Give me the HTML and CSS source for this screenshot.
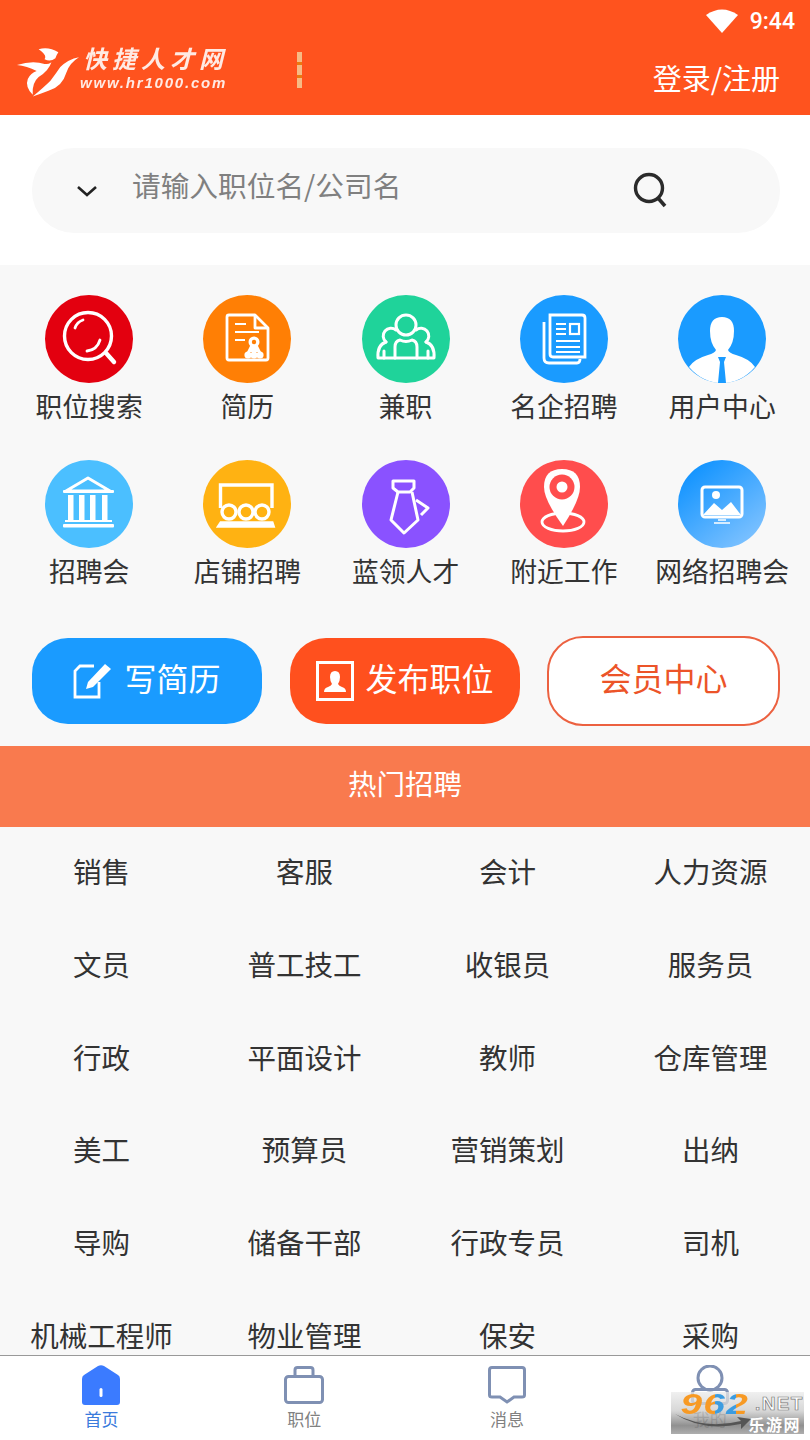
FILE: index.html
```html
<!DOCTYPE html>
<html>
  <head>
    <meta charset="UTF-8" />
    <title>快捷人才网</title>
    <link rel="stylesheet" href="styles.css">
  </head>
  <body>
    <div id="header">
      <div class="status">
        <svg class="wifi" width="32" height="24" viewBox="0 0 32 24"><path d="M0 6 Q16 -5 32 6 L16 24 Z" fill="#fff"/></svg>
        <span class="time">9:44</span>
      </div>
      <div class="head-row">
        <div class="logo">
          <svg width="66" height="50" viewBox="0 0 66 50" fill="#fff">
            <path d="M24 2 Q34 -1 44 5 Q42 8 41 11 Q36 15 30 12 Q33 8 24 2 Z"/>
            <path d="M2 18 Q18 13 30 17 Q35 17 37 15 Q34 24 24 30 Q17 36 18 48 Q10 40 13 32 Q16 26 22 24 Q12 19 2 18 Z"/>
            <path d="M65 10 Q55 16 52 26 Q48 40 34 44 Q26 47 18 50 Q30 40 36 34 Q42 26 46 20 Q54 12 65 10 Z"/>
          </svg>
          <div class="logo-text">
            <span class="logo-name">快捷人才网</span>
            <span class="logo-url">www.hr1000.com</span>
          </div>
        </div>
        <div class="logo-bar"></div>
        <a class="login">登录/注册</a>
      </div>
    </div>

    <div id="search">
      <div class="search-box">
        <svg class="chev" width="22" height="12" viewBox="0 0 22 12"><path d="M2 2 L11 10 L20 2" fill="none" stroke="#222" stroke-width="2.6"/></svg>
        <span class="placeholder">请输入职位名/公司名</span>
        <svg class="lens" width="36" height="36" viewBox="0 0 36 36"><circle cx="16" cy="16" r="13.5" fill="none" stroke="#2b2b2b" stroke-width="3.4"/><path d="M25 26 L32 34" stroke="#2b2b2b" stroke-width="3.6" fill="none"/></svg>
      </div>
    </div>

    <div id="menu">
      <div class="menu-grid">
        <div class="cell">
          <svg class="ico" viewBox="0 0 88 88"><circle cx="44" cy="44" r="44" fill="#e3000f"/><g fill="none" stroke="#fff" stroke-linecap="round"><circle cx="43" cy="41" r="23.5" stroke-width="3.4"/><path d="M61 58 L69 67" stroke-width="4.4"/><path d="M30 33 Q32 27 38 25" stroke-width="2.8"/><path d="M42 56 Q52 55 55 45" stroke-width="2.8"/></g></svg>
          <span>职位搜索</span>
        </div>
        <div class="cell">
          <svg class="ico" viewBox="0 0 88 88"><circle cx="44" cy="44" r="44" fill="#ff7f05"/><g fill="none" stroke="#fff" stroke-width="2.8" stroke-linejoin="round"><path d="M26 20 H52 L65 33 V63 Q65 65 63 65 H26 Q24 65 24 63 V22 Q24 20 26 20 Z"/><path d="M52 20 V33 H65"/><path d="M32 29 H43 M32 37 H56 M32 45 H42" stroke-width="2.2"/></g><g fill="#fff"><circle cx="51" cy="47" r="5.5"/><circle cx="45" cy="60" r="3.6"/><circle cx="51" cy="60" r="3.6"/><circle cx="57" cy="60" r="3.6"/><path d="M47 51 H55 L58 57 H44 Z"/></g><circle cx="51" cy="47" r="2.2" fill="#ff7f05"/></svg>
          <span>简历</span>
        </div>
        <div class="cell">
          <svg class="ico" viewBox="0 0 88 88"><circle cx="44" cy="44" r="44" fill="#1fd39a"/><g fill="none" stroke="#fff" stroke-width="3" stroke-linejoin="round" stroke-linecap="round"><circle cx="44" cy="30" r="10"/><path d="M34 35 A7.5 7.5 0 1 0 24 47"/><path d="M54 35 A7.5 7.5 0 1 1 64 47"/><path d="M24 47 Q15 50 16 63 H72 Q73 50 64 47"/><path d="M33 63 V52 Q33 46 38 45 Q44 48 50 45 Q55 46 55 52 V63"/><path d="M22 63 V56 M66 63 V56"/></g></svg>
          <span>兼职</span>
        </div>
        <div class="cell">
          <svg class="ico" viewBox="0 0 88 88"><circle cx="44" cy="44" r="44" fill="#1a9bff"/><g fill="none" stroke="#fff" stroke-width="2.8"><path d="M30 20 H62 Q65 20 65 23 V62 H33 Q30 62 30 59 Z"/><path d="M24 27 V63 Q24 68 29 68 H57 Q60 68 60 64"/><path d="M36 29 H46 M36 34 H46 M36 39 H46 M36 46 H60 M36 52 H60 M36 57 H60" stroke-width="2"/><rect x="50" y="29" width="9" height="10" stroke-width="2.2"/></g></svg>
          <span>名企招聘</span>
        </div>
        <div class="cell">
          <svg class="ico" viewBox="0 0 88 88"><circle cx="44" cy="44" r="44" fill="#1a9bff"/><path d="M44 22 Q56 22 56 36 Q56 48 50 55 Q51 58 58 60 Q72 64 77 72 Q63 88 44 88 Q25 88 11 72 Q16 64 30 60 Q37 58 38 55 Q32 48 32 36 Q32 22 44 22 Z" fill="#fff"/><path d="M40 62 H48 L46 67 L48 88 H40 L42 67 Z" fill="#1a9bff"/></svg>
          <span>用户中心</span>
        </div>
        <div class="cell">
          <svg class="ico" viewBox="0 0 88 88"><circle cx="44" cy="44" r="44" fill="#4bbfff"/><path d="M43 18 L21 31 H65 Z" fill="none" stroke="#fff" stroke-width="3" stroke-linejoin="round"/><g fill="#fff"><rect x="18" y="30" width="51" height="3" rx="1"/><rect x="23" y="35" width="5.5" height="25"/><rect x="34" y="35" width="5.5" height="25"/><rect x="45" y="35" width="5.5" height="25"/><rect x="57" y="35" width="5.5" height="25"/><rect x="20" y="60" width="47" height="2"/><rect x="18" y="64" width="51" height="3.5" rx="1"/></g></svg>
          <span>招聘会</span>
        </div>
        <div class="cell">
          <svg class="ico" viewBox="0 0 88 88"><circle cx="44" cy="44" r="44" fill="#ffb212"/><g fill="none" stroke="#fff" stroke-width="3.4"><path d="M17.5 48 V25 H69 V48"/><circle cx="26" cy="52" r="7"/><circle cx="43" cy="52" r="7"/><circle cx="59" cy="52" r="7"/><path d="M18 63 H69 L70 66 H16 Z"/></g></svg>
          <span>店铺招聘</span>
        </div>
        <div class="cell">
          <svg class="ico" viewBox="0 0 88 88"><circle cx="44" cy="44" r="44" fill="#8a52ff"/><g fill="none" stroke="#fff" stroke-width="3" stroke-linejoin="round"><path d="M31 21 H52 V28 L48 32 H36 L31 28 Z"/><path d="M36 32 L29 60 L42 73 L56 60 L50 32"/><path d="M54 40 L66 48 L59 55"/></g></svg>
          <span>蓝领人才</span>
        </div>
        <div class="cell">
          <svg class="ico" viewBox="0 0 88 88"><circle cx="44" cy="44" r="44" fill="#ff4d4d"/><ellipse cx="43" cy="62" rx="21" ry="9" fill="none" stroke="#fff" stroke-width="2.8"/><path d="M42 9 Q60 9 60 27 Q60 40 43 66 Q24 40 24 27 Q24 9 42 9 Z" fill="#fff"/><circle cx="42" cy="27" r="12.5" fill="#ff4d4d"/><circle cx="42" cy="27" r="5.5" fill="#fff"/></svg>
          <span>附近工作</span>
        </div>
        <div class="cell">
          <svg class="ico" viewBox="0 0 88 88"><defs><linearGradient id="screen" x1="0.2" y1="0.1" x2="0.85" y2="0.9"><stop offset="0" stop-color="#1595ff"/><stop offset="1" stop-color="#7cc1ff"/></linearGradient></defs><circle cx="44" cy="44" r="44" fill="url(#screen)"/><rect x="24" y="27" width="40" height="30" rx="3" fill="none" stroke="#fff" stroke-width="3"/><circle cx="38" cy="35" r="4" fill="#fff"/><path d="M25 55 L36 43 L44 50 L53 42 L63 55 Z" fill="#fff"/><path d="M36 63 H52 M40 60 H48" stroke="#fff" stroke-width="1.6"/></svg>
          <span>网络招聘会</span>
        </div>
      </div>

      <div class="actions">
        <a class="act act-blue">
          <svg width="40" height="38" viewBox="0 0 40 38"><path d="M21 4 H7 L2 9 V35 H26 V20" fill="none" stroke="#fff" stroke-width="2.8"/><path d="M13 27 L15 20 L32 2 L38 7 L20 25 Z" fill="#fff"/></svg>
          <span class="act-text">写简历</span>
        </a>
        <a class="act act-orange">
          <svg width="38" height="40" viewBox="0 0 38 40"><rect x="1.5" y="1.5" width="35" height="37" fill="none" stroke="#fff" stroke-width="3"/><path d="M19 10 Q24 10 24 16 Q24 20 22 23 Q23 25 26 26 Q30 27 30 31 H8 Q8 27 12 26 Q15 25 16 23 Q14 20 14 16 Q14 10 19 10 Z" fill="#fff"/></svg>
          <span class="act-text">发布职位</span>
        </a>
        <a class="act act-line"><span class="act-text">会员中心</span></a>
      </div>
    </div>

    <div id="banner">热门招聘</div>

    <div id="hot">
      <span>销售</span><span>客服</span><span>会计</span><span>人力资源</span>
      <span>文员</span><span>普工技工</span><span>收银员</span><span>服务员</span>
      <span>行政</span><span>平面设计</span><span>教师</span><span>仓库管理</span>
      <span>美工</span><span>预算员</span><span>营销策划</span><span>出纳</span>
      <span>导购</span><span>储备干部</span><span>行政专员</span><span>司机</span>
      <span>机械工程师</span><span>物业管理</span><span>保安</span><span>采购</span>
    </div>

    <div id="nav">
      <div class="tab on">
        <svg width="38" height="40" viewBox="0 0 38 40"><path d="M16 1 Q19 -0.5 22 1 L36 10 Q38 11 38 14 V37 Q38 40 35 40 H3 Q0 40 0 37 V14 Q0 11 2 10 Z" fill="#3b7bff"/><rect x="17.5" y="23" width="3" height="9" rx="1.5" fill="#fff"/></svg>
        <span>首页</span>
      </div>
      <div class="tab">
        <svg width="40" height="38" viewBox="0 0 40 38"><rect x="1.5" y="10.5" width="37" height="26" rx="3" fill="none" stroke="#7f90b3" stroke-width="3"/><path d="M11 10 V4 Q11 1.5 13.5 1.5 H26.5 Q29 1.5 29 4 V10" fill="none" stroke="#7f90b3" stroke-width="3"/></svg>
        <span>职位</span>
      </div>
      <div class="tab">
        <svg width="38" height="38" viewBox="0 0 38 38"><path d="M4 1.5 H34 Q36.5 1.5 36.5 4 V29 Q36.5 31 34 31 H26 L19 36 L12 31 H4 Q1.5 31 1.5 29 V4 Q1.5 1.5 4 1.5 Z" fill="none" stroke="#7f90b3" stroke-width="3"/></svg>
        <span>消息</span>
      </div>
      <div class="tab">
        <svg width="38" height="40" viewBox="0 0 38 40"><circle cx="19" cy="13" r="12" fill="none" stroke="#7f90b3" stroke-width="3"/><rect x="1.5" y="24.5" width="35" height="14" rx="3" fill="none" stroke="#7f90b3" stroke-width="3"/></svg>
        <span>我的</span>
      </div>
    </div>

    <div class="mark">
      <div class="mark-top"><b>962</b><i>.NET</i></div>
      <div class="mark-sub">乐游网</div>
      <svg class="mark-swoosh" width="76" height="18" viewBox="0 0 76 18"><path d="M0 2 Q30 18 66 9 L62 5 L76 7 L66 17 L66 12 Q28 20 0 2 Z" fill="#555"/></svg>
    </div>
  </body>
</html>
```

FILE: styles.css
```css
:root {
  --orange: #ff531e;
  --grey-bg: #f8f8f8;
  --text: #333;
  --font: "Noto Sans CJK SC", "Noto Sans", sans-serif;
}
* {
  box-sizing: border-box;
}
body {
  margin: 0;
  width: 810px;
  height: 1440px;
  overflow: hidden;
  display: flex;
  flex-direction: column;
  position: relative;
  background: #fff;
  font-family: var(--font);
  color: var(--text);
}
#header {
  height: 115px;
  flex: none;
  background: var(--orange);
  color: #fff;
  padding: 8px 15px 0 15px;
}
.status {
  height: 26px;
  display: flex;
  justify-content: flex-end;
  align-items: center;
  gap: 12px;
}
.time {
  font-family: "Roboto", sans-serif;
  font-size: 23px;
  font-weight: 500;
}
.head-row {
  display: flex;
  align-items: center;
  margin-top: 12px;
  padding-right: 15px;
}
.logo {
  width: 213px;
  display: flex;
  align-items: center;
  gap: 3px;
}
.logo-text {
  display: flex;
  flex-direction: column;
  line-height: 1;
  margin-bottom: 7px;
}
.logo-name {
  font-size: 24px;
  font-weight: 700;
  font-style: italic;
  letter-spacing: 5px;
  opacity: 0.88;
  white-space: nowrap;
}
.logo-url {
  font-family: "Liberation Sans", sans-serif;
  font-size: 15px;
  font-weight: 700;
  font-style: italic;
  margin-top: 5px;
  margin-left: -3px;
  letter-spacing: 1.8px;
  opacity: 0.88;
  white-space: nowrap;
}
.logo-bar {
  width: 5px;
  height: 36px;
  margin-left: 69px;
  margin-bottom: 4px;
  background: repeating-linear-gradient(#f6bb85 0 10px, #ea7a10 10px 13px);
}
.login {
  margin-left: auto;
  padding-top: 10px;
  font-size: 29px;
  line-height: 40px;
  white-space: nowrap;
}
#search {
  height: 150px;
  flex: none;
  padding: 33px 30px 0 32px;
}
.search-box {
  height: 85px;
  border-radius: 42px;
  background: var(--grey-bg);
  display: flex;
  align-items: center;
  padding: 0 111px 0 44px;
}
.chev {
  flex: none;
}
.placeholder {
  margin-left: 34px;
  margin-bottom: 12px;
  font-size: 28.7px;
  color: #808080;
  white-space: nowrap;
}
.lens {
  margin-left: auto;
  flex: none;
  margin-bottom: 2px;
}
#menu {
  height: 481px;
  flex: none;
  background: var(--grey-bg);
  padding-top: 30px;
}
.menu-grid {
  display: grid;
  grid-template-columns: repeat(5, 158.25px);
  gap: 31px 0;
  padding-left: 10px;
}
.cell {
  display: flex;
  flex-direction: column;
  align-items: center;
  font-size: 26.8px;
  line-height: 46px;
  white-space: nowrap;
}
.ico {
  width: 88px;
  height: 88px;
  display: block;
}
.actions {
  display: flex;
  align-items: center;
  gap: 28px;
  margin-top: 42px;
  padding: 0 30px 0 32px;
}
.act {
  width: 230px;
  height: 86px;
  border-radius: 36px;
  display: flex;
  align-items: center;
  justify-content: center;
  gap: 11px;
  color: #fff;
  font-size: 32px;
  white-space: nowrap;
}
.act-text {
  margin-bottom: 8px;
}
.act-blue {
  background: #1a9bff;
}
.act-orange {
  background: #ff501e;
}
.act-line {
  width: 233px;
  height: 90px;
  margin-left: -1px;
  border: 2px solid #ec6140;
  background: #fff;
  color: #ec5429;
}
#banner {
  height: 81px;
  flex: none;
  background: #f97a4e;
  color: #fff;
  font-size: 28.5px;
  padding-bottom: 8px;
  display: flex;
  align-items: center;
  justify-content: center;
}
#hot {
  flex: 1;
  min-height: 0;
  overflow: hidden;
  background: var(--grey-bg);
  display: grid;
  grid-template-columns: repeat(4, 203px);
  grid-auto-rows: 92.8px;
  font-size: 28.5px;
  line-height: 34px;
}
#hot span {
  display: block;
  height: 34px;
  margin-top: 27px;
  text-align: center;
  white-space: nowrap;
}
#nav {
  height: 85px;
  flex: none;
  border-top: 1px solid #999;
  background: #fff;
  display: grid;
  grid-template-columns: repeat(4, 202.8px);
  padding-top: 9px;
}
.tab {
  display: flex;
  flex-direction: column;
  align-items: center;
  color: #808080;
  font-size: 17px;
  line-height: 24px;
  gap: 2px;
}
.tab svg {
  height: 40px;
}
.tab.on {
  color: #3b7bdc;
}
.mark {
  position: absolute;
  left: 671px;
  top: 1392px;
  width: 133px;
  height: 42px;
  background: linear-gradient(rgba(235, 235, 235, 0.75), rgba(205, 205, 205, 0.8) 45%, rgba(125, 125, 125, 0.85) 80%, rgba(165, 165, 165, 0.9));
}
.mark-top {
  height: 23px;
  display: flex;
  align-items: center;
  white-space: nowrap;
}
.mark-top b {
  width: 78px;
  padding-left: 7px;
  font-family: "Liberation Sans", sans-serif;
  font-size: 29px;
  line-height: 24px;
  font-style: italic;
  letter-spacing: 1px;
  transform: scaleX(1.34);
  transform-origin: left center;
  color: #f79a25;
  background: linear-gradient(90deg, #f79a25 0 42%, #3c9ce0 42% 62%, #f79a25 62%);
  -webkit-background-clip: text;
  background-clip: text;
  -webkit-text-fill-color: transparent;
}
.mark-top i {
  font-family: "Liberation Sans", sans-serif;
  font-size: 19px;
  line-height: 24px;
  font-style: normal;
  font-weight: 700;
  letter-spacing: 1.4px;
  color: #fff;
  -webkit-text-stroke: 0.7px #777;
  margin-left: 6px;
}
.mark-sub {
  text-align: right;
  font-size: 16px;
  line-height: 18px;
  letter-spacing: 1.5px;
  font-weight: 700;
  color: #fff;
  padding-right: 3px;
}
.mark-swoosh {
  position: absolute;
  left: 4px;
  bottom: 4px;
}
```
